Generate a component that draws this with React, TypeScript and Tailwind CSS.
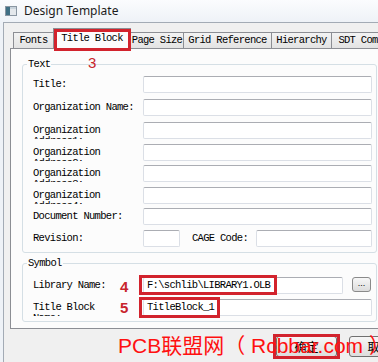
import React from "react";

const MONO = "font-['Liberation_Mono',monospace] text-[10.5px] tracking-[-0.7px] text-black";

function Input({ className = "", value = "" }: { className?: string; value?: string }) {
  return (
    <div
      className={`h-[17px] shrink-0 bg-white border border-[#dbdfe6] border-t-[#abadb3] rounded-[2px] pl-[2px] leading-[15px] whitespace-nowrap overflow-hidden ${MONO} ${className}`}
    >
      {value}
    </div>
  );
}

function Label({ lines, className = "w-[110px]" }: { lines: string[]; className?: string }) {
  return (
    <div className={`${className} h-[17px] shrink-0 overflow-hidden pt-[3px] leading-[11px] ${MONO}`}>
      {lines.map((l, i) => (
        <div key={i} className="whitespace-nowrap">
          {l}
        </div>
      ))}
    </div>
  );
}

const textRows: { l: string[]; mt: string }[] = [
  { l: ["Title:"], mt: "" },
  { l: ["Organization Name:"], mt: "mt-[6px]" },
  { l: ["Organization", "Address1:"], mt: "mt-[6px]" },
  { l: ["Organization", "Address2:"], mt: "mt-[5px]" },
  { l: ["Organization", "Address3:"], mt: "mt-[4px]" },
  { l: ["Organization", "Address4:"], mt: "mt-[5px]" },
  { l: ["Document Number:"], mt: "mt-[4px]" },
];

function Tab({ label, className }: { label: string; className: string }) {
  return (
    <div
      className={`h-[16px] shrink-0 -ml-px border-t border-l border-r border-[#8c8e94] bg-gradient-to-b from-[#f3f3f3] to-[#e3e3e3] flex items-center justify-center pt-[1px] whitespace-nowrap overflow-hidden ${MONO} ${className}`}
    >
      {label}
    </div>
  );
}

export default function App() {
  return (
    <div className="w-[378px] h-[362px] overflow-hidden relative bg-[#eef2f7]">
      <div className="w-[400px] h-full flex flex-col">
        {/* title bar */}
        <div className="h-[22px] shrink-0 flex items-center pl-[5px] bg-gradient-to-b from-[#fbfcfe] to-[#eef2f7]">
          <svg width="12" height="10" viewBox="0 0 12 10" className="shrink-0">
            <rect x="0.5" y="0.5" width="11" height="9" fill="#e4e8ec" stroke="#8a96a2" />
            <rect x="1" y="1" width="4" height="8" fill="#3f6f84" />
            <rect x="5" y="1" width="6" height="2" fill="#c9d3dc" />
          </svg>
          <span className="ml-[7px] text-[12px] text-[#1c1c1c] font-['Noto_Sans',sans-serif] leading-none">
            Design Template
          </span>
        </div>

        {/* body */}
        <div className="flex-1 ml-[3px] border-l border-t border-[#a3abb5] bg-[#f0f0f0] pl-[6px] pt-[5px]">
          {/* tabs */}
          <div className="relative h-[20px] flex items-end pl-[4px]">
            <Tab label="Fonts" className="w-[41px]" />
            <div
              className={`relative z-10 h-[21px] w-[78px] shrink-0 -ml-px -mb-px border-t border-l border-r border-[#8c8e94] bg-[#fcfcfc] flex items-center justify-center pb-[1px] whitespace-nowrap ${MONO}`}
            >
              Title Block
              <div className="absolute left-[0px] top-[0px] w-[77px] h-[22px] border-[3px] border-[#d2232d]" />
            </div>
            <Tab label="Page Size" className="w-[54px]" />
            <Tab label="Grid Reference" className="w-[89px]" />
            <Tab label="Hierarchy" className="w-[61px]" />
            <Tab label="SDT Compatibility" className="w-[110px]" />
          </div>

          {/* panel */}
          <div className="w-[380px] h-[281px] border border-[#8c8e94] bg-[#fcfcfc] pt-[15px] pl-[11px]">
            {/* Text group */}
            <div className="relative w-[355px] border border-[#d5dfe5] rounded-[3px] pt-[11px] pb-[5px] pl-[10px] flex flex-col">
              <div className={`absolute -top-[7px] left-[4px] px-[1px] bg-[#fcfcfc] leading-[12px] ${MONO}`}>Text</div>
              {textRows.map((r, i) => (
                <div key={i} className={`flex h-[17px] ${r.mt}`}>
                  <Label lines={r.l} />
                  <Input className="w-[229px]" />
                </div>
              ))}
              <div className="flex h-[17px] mt-[5px] items-start">
                <Label lines={["Revision:"]} />
                <Input className="w-[37px]" />
                <Label lines={["CAGE Code:"]} className="w-[64px] ml-[12px]" />
                <Input className="w-[116px]" />
              </div>
            </div>

            {/* Symbol group */}
            <div className="relative mt-[10px] w-[355px] border border-[#d5dfe5] rounded-[3px] pt-[13px] pb-[5px] pl-[10px] flex flex-col">
              <div className={`absolute -top-[7px] left-[4px] px-[1px] bg-[#fcfcfc] leading-[12px] ${MONO}`}>Symbol</div>
              <div className="flex h-[17px] items-start">
                <Label lines={["Library Name:"]} />
                <div className="relative">
                  <Input className="w-[200px] pl-[3px]" value="F:\schlib\LIBRARY1.OLB" />
                  <div className="absolute -left-[4px] -top-[2px] w-[138px] h-[20px] border-[3px] border-[#d2232d]" />
                </div>
                <div className="ml-[9px] mt-[0px] w-[19px] h-[15px] rounded-[3px] border border-[#8a8a8a] bg-gradient-to-b from-[#f7f7f7] to-[#dcdcdc] flex items-center justify-center text-[9px] leading-none text-black font-['Liberation_Sans',sans-serif] pb-[2px]">
                  ...
                </div>
              </div>
              <div className="flex h-[17px] mt-[5px] items-start">
                <Label lines={["Title Block", "Name:"]} />
                <div className="relative">
                  <Input className="w-[229px] pl-[3px]" value="TitleBlock_1" />
                  <div className="absolute -left-[4px] -top-[2px] w-[81px] h-[21px] border-[3px] border-[#d2232d]" />
                </div>
              </div>
            </div>
          </div>

          {/* buttons */}
          <div className="flex pl-[266px] mt-[7px] gap-[12px]">
            <div className="relative w-[61px] h-[21px] shrink-0 rounded-[3px] border border-[#707070] bg-gradient-to-b from-[#f6f6f6] to-[#dddddd] flex items-center justify-center text-[12px] text-black font-['Noto_Sans_CJK_SC',sans-serif] leading-none">
              确定
              <div className="absolute -left-[4px] -top-[3px] w-[67px] h-[25px] border-[3px] border-[#d2232d]" />
            </div>
            <div className="w-[61px] h-[21px] shrink-0 rounded-[3px] border border-[#707070] bg-gradient-to-b from-[#f6f6f6] to-[#dddddd] flex items-center justify-center text-[12px] text-black font-['Noto_Sans_CJK_SC',sans-serif] leading-none">
              取消
            </div>
          </div>
        </div>
      </div>

      {/* annotations */}
      <div className="absolute left-[88px] top-[55px] text-[15px] leading-[15px] text-[#c8242c] font-['Liberation_Sans',sans-serif]">3</div>
      <div className="absolute left-[120px] top-[279px] text-[15px] leading-[15px] font-bold text-[#c8242c] font-['Liberation_Sans',sans-serif]">4</div>
      <div className="absolute left-[120px] top-[300px] text-[15px] leading-[15px] font-bold text-[#c8242c] font-['Liberation_Sans',sans-serif]">5</div>
      <div className="absolute left-[118px] top-[335px] text-[21px] leading-[21px] whitespace-nowrap text-[#ff1010] font-['Liberation_Sans','Noto_Sans_CJK_SC',sans-serif]">
        PCB联盟网（ Rcbbar.com ）
      </div>
    </div>
  );
}
